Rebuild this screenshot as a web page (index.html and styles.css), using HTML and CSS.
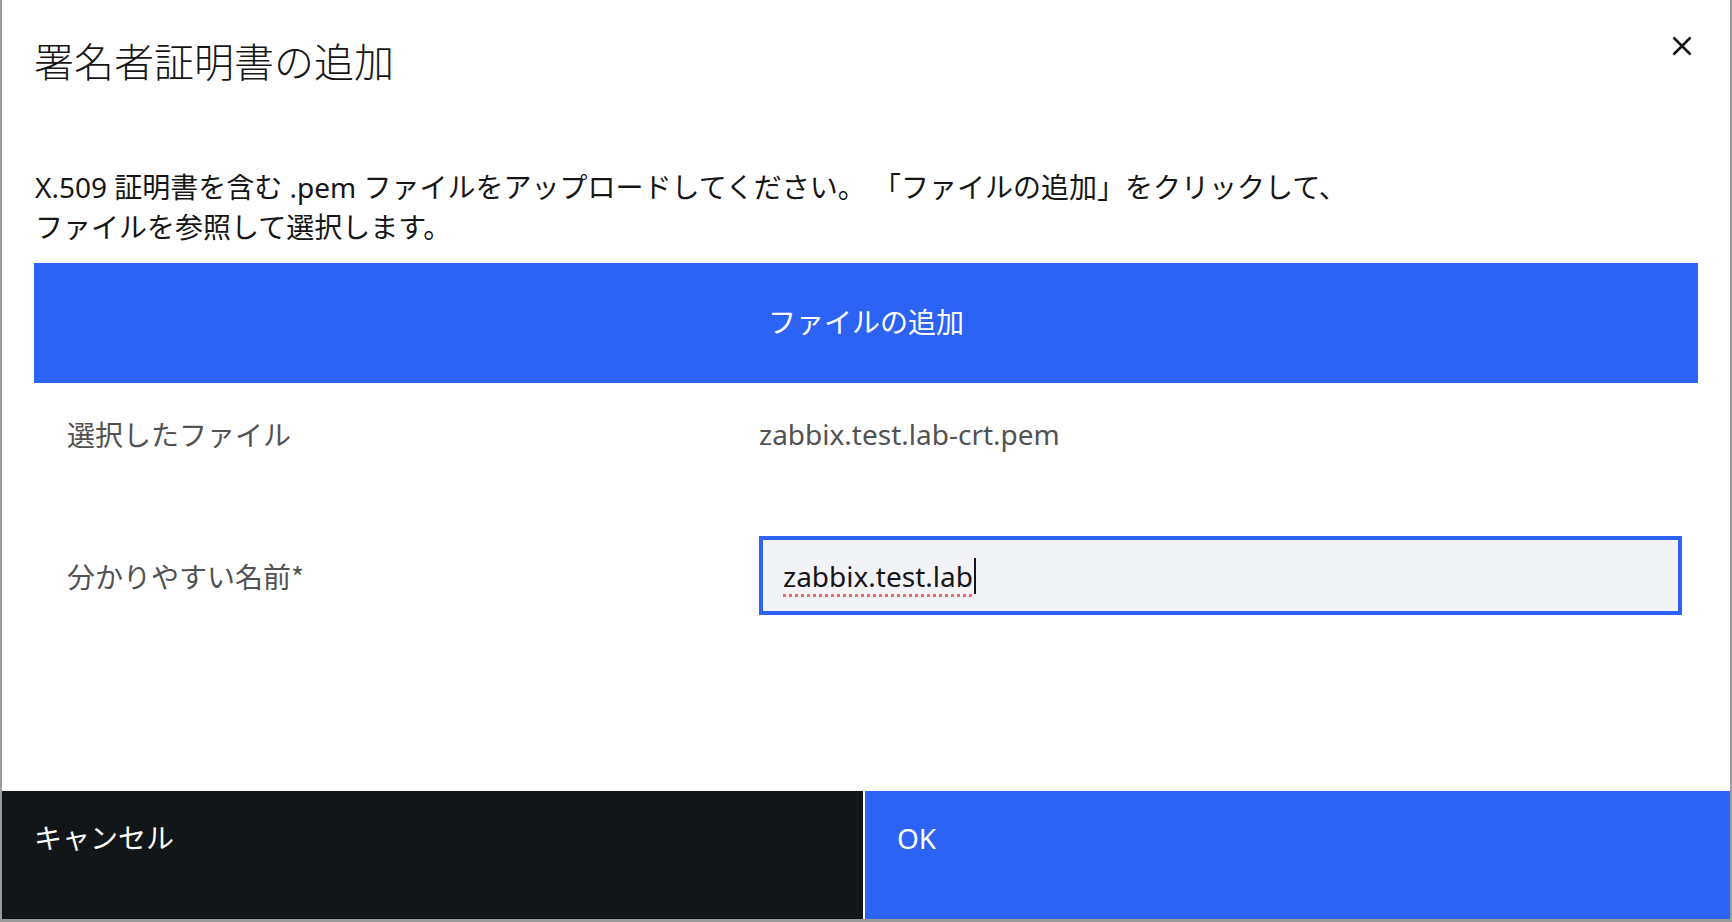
FILE: index.html
```html
<!DOCTYPE html>
<html lang="ja">
	<head>
		<meta charset="UTF-8">
		<meta name="viewport" content="width=device-width,initial-scale=1" />
		<title>署名者証明書の追加</title>
		<link rel="stylesheet" href="styles.css">
	</head>
	<body>
		<div class="dialog">
			<div class="header">
				<h2 class="title">署名者証明書の追加</h2>
				<button class="close" type="button" aria-label="閉じる">
					<svg width="20" height="20" viewBox="0 0 20 20">
						<path d="M1.5 1.5 L18.5 18.5 M18.5 1.5 L1.5 18.5" stroke="#161616" stroke-width="2.6" fill="none" />
					</svg>
				</button>
			</div>
			<div class="body">
				<p class="desc">
					X.509 証明書を含む .pem ファイルをアップロードしてください。 「ファイルの追加」をクリックして、<br>
					ファイルを参照して選択します。
				</p>
				<button class="add-file" type="button">ファイルの追加</button>
				<div class="fields">
					<div class="row">
						<span class="label">選択したファイル</span>
						<span class="value">zabbix.test.lab-crt.pem</span>
					</div>
					<div class="row row-input">
						<span class="label">分かりやすい名前*</span>
						<div class="field"><span class="typed">zabbix.test.lab</span><span class="caret"></span></div>
					</div>
				</div>
			</div>
			<div class="footer">
				<button class="btn btn-secondary" type="button">キャンセル</button>
				<button class="btn btn-primary" type="button">OK</button>
			</div>
		</div>
	</body>
</html>
```

FILE: styles.css
```css
html, body{
	margin: 0;
	padding: 0;
	height: 100%;
}
body{
	background: #9b9b9b;
	font-family: "Noto Sans", "Noto Sans CJK JP", sans-serif;
	color: #161616;
}
.dialog{
	box-sizing: border-box;
	width: 1728px;
	height: 919px;
	margin-left: 2px;
	background: #fff;
	display: flex;
	flex-direction: column;
}
.header{
	display: flex;
	justify-content: space-between;
	align-items: flex-start;
	padding: 32px 28px 0 32px;
}
.title{
	margin: 0;
	font-size: 40px;
	line-height: 56px;
	font-weight: 300;
	font-family: "Noto Sans CJK JP", sans-serif;
}
.close{
	width: 40px;
	height: 40px;
	margin-top: -6px;
	padding: 0;
	border: 0;
	background: transparent;
	display: flex;
	align-items: center;
	justify-content: center;
}
.body{
	padding: 0 32px;
}
.desc{
	margin: 79px 0 0 1px;
	font-size: 28px;
	line-height: 40px;
}
.add-file{
	display: block;
	width: 100%;
	height: 120px;
	margin-top: 16px;
	padding: 0 0 4px;
	border: 0;
	background: #2c63f5;
	color: #fff;
	font-family: "Noto Sans CJK JP", sans-serif;
	font-size: 28px;
}
.fields{
	padding: 31px 16px 0 33px;
}
.row{
	display: grid;
	grid-template-columns: 692px 1fr;
	align-items: center;
	font-size: 28px;
	line-height: 40px;
}
.row-input{
	margin-top: 82px;
}
.label{
	color: #525252;
	font-family: "Noto Sans CJK JP", sans-serif;
}
.value{
	color: #525252;
}
.field{
	box-sizing: border-box;
	height: 79px;
	border: 4px solid #2c63f5;
	background: #f2f3f7;
	padding: 0 20px;
	display: flex;
	align-items: center;
	color: #161616;
}
.typed{
	text-decoration: underline dotted #ee6b62;
	text-decoration-thickness: 3px;
	text-underline-offset: 7px;
}
.caret{
	display: inline-block;
	width: 2px;
	height: 36px;
	background: #161616;
	margin-left: 1px;
}
.footer{
	margin-top: auto;
	display: grid;
	grid-template-columns: 861px 1fr;
	gap: 2px;
	height: 128px;
	background: #fff;
}
.btn{
	border: 0;
	margin: 0;
	padding: 29px 32px 0;
	text-align: left;
	display: flex;
	align-items: flex-start;
	font-family: "Noto Sans", "Noto Sans CJK JP", sans-serif;
	font-size: 28px;
	line-height: 36px;
	color: #fff;
}
.btn-secondary{
	background: #121619;
}
.btn-primary{
	background: #2c63f5;
}
```
